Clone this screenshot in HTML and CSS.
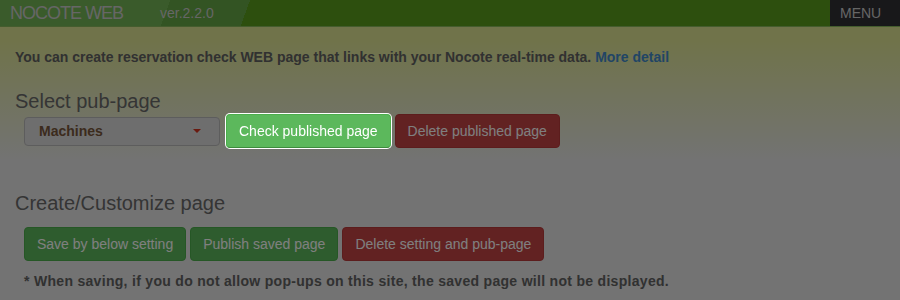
FILE: index.html
```html
<!DOCTYPE html>
<html lang="en">
<head>
  <meta charset="UTF-8">
  <title>NOCOTE WEB</title>
  <link rel="stylesheet" href="styles.css">
</head>
<body>
  <header class="topbar">
    <div class="brand">
      <span class="logo">NOCOTE WEB</span>
      <span class="version">ver.2.2.0</span>
    </div>
    <button class="menu-btn">MENU</button>
  </header>

  <main class="content">
    <p class="intro">You can create reservation check WEB page that links with your Nocote real-time data. <a href="#">More detail</a></p>

    <!-- published page -->
    <h2>Select pub-page</h2>
    <div class="btn-row">
      <div class="select">Machines <span class="caret"></span></div>
      <button class="btn btn-success highlight">Check published page</button>
      <button class="btn btn-danger">Delete published page</button>
    </div>

    <!-- customize -->
    <h2 class="section-gap">Create/Customize page</h2>
    <div class="btn-row">
      <button class="btn btn-success">Save by below setting</button>
      <button class="btn btn-success">Publish saved page</button>
      <button class="btn btn-danger">Delete setting and pub-page</button>
    </div>
    <p class="note">* When saving, if you do not allow pop-ups on this site, the saved page will not be displayed.</p>
  </main>

  <div class="backdrop"></div>
</body>
</html>
```

FILE: styles.css
```css
* { margin: 0; padding: 0; box-sizing: border-box; }
html, body { height: 300px; overflow: hidden; }
body {
  font-family: 'Liberation Sans', Arial, sans-serif;
  font-size: 14px;
  color: #666;
  background: linear-gradient(180deg, #e0e694 0, #e0e694 40px, #e6e6e6 160px, #e6e6e6 100%);
}

.topbar {
  height: 27px;
  display: flex;
  justify-content: space-between;
  background: linear-gradient(110deg, #74b656 0, #74b656 160px, #66a846 160px, #66a846 235px, #5a9e1c 235px);
  border-bottom: 1px solid #8aba5c;
}
.brand { display: flex; align-items: center; padding-left: 10px; }
.logo { color: #ccc; font-size: 18px; letter-spacing: -1px; }
.version { color: #ccc; font-size: 14px; margin-left: 37px; }
.menu-btn {
  width: 70px;
  border: none;
  background: #303034;
  color: #ccc;
  font-family: inherit;
  font-size: 14px;
  text-align: left;
  padding-left: 10px;
}

.content { padding: 0 15px; }
.intro {
  margin-top: 22px;
  font-size: 14px;
  font-weight: bold;
  line-height: 16px;
  color: #626262;
}
.intro a { color: #428bca; text-decoration: none; }

h2 {
  margin-top: 25px;
  font-size: 20px;
  font-weight: normal;
  line-height: 22px;
  color: #6a6a6a;
}
h2.section-gap { margin-top: 44px; }

.btn-row {
  display: flex;
  align-items: center;
  gap: 4px;
  margin: 2px 0 0 9px;
}
h2.section-gap + .btn-row { margin-top: 13px; }

.select {
  width: 196px;
  height: 29px;
  margin-right: 2px;
  display: flex;
  align-items: center;
  justify-content: space-between;
  padding: 0 18px 0 14px;
  border: 1px solid #bbb;
  border-radius: 4px;
  background: #dcdcdc;
  color: #78563a;
  font-size: 14px;
  font-weight: bold;
}
.caret {
  border-left: 4px solid transparent;
  border-right: 4px solid transparent;
  border-top: 4px solid #d43420;
}

.btn {
  height: 34px;
  padding: 6px 12px;
  border: 1px solid transparent;
  border-radius: 4px;
  font-family: inherit;
  font-size: 14px;
  line-height: 20px;
  color: #fff;
  cursor: pointer;
}
.btn-success { background: #5cb85c; border-color: #4cae4c; }
.btn-danger { background: #c44444; border-color: #b83a3a; }

.highlight {
  position: relative;
  z-index: 1001;
  box-shadow: 0 0 0 1px #fff;
  border-bottom-color: #3d8b3d;
}

.note {
  margin: 12px 0 0 9px;
  font-size: 14px;
  font-weight: bold;
  line-height: 16px;
  letter-spacing: 0.3px;
  color: #626262;
}

.backdrop {
  position: fixed;
  top: 0; left: 0; width: 100%; height: 100%;
  background: rgba(0, 0, 0, 0.5);
  z-index: 1000;
}
```
